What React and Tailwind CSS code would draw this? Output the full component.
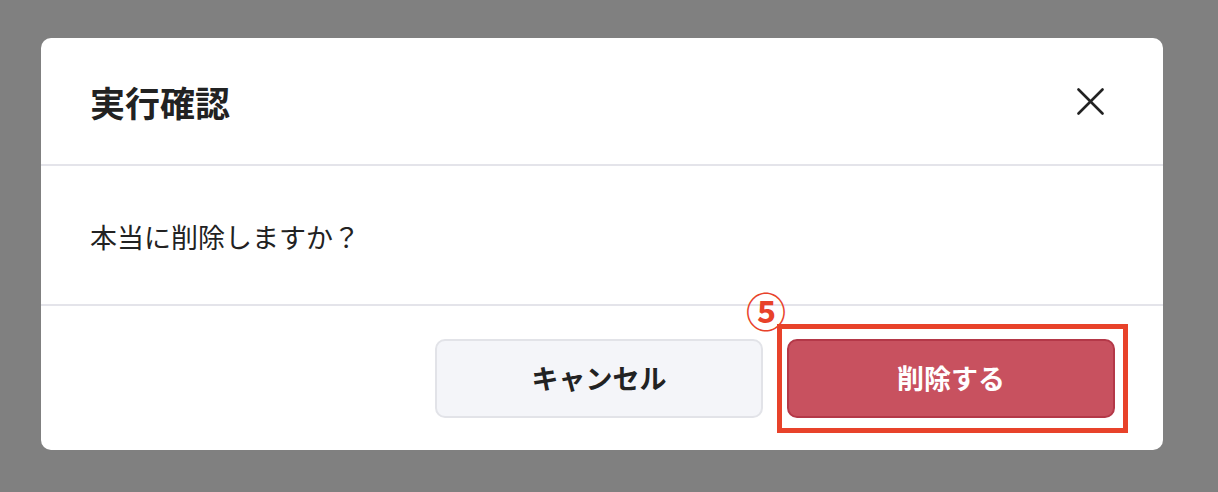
export default function App() {
  return (
    <div
      className="w-[1218px] h-[492px] bg-[#808080] pt-[38px] pl-[41px]"
      style={{ fontFamily: '"Noto Sans CJK JP", "Noto Sans", sans-serif' }}
    >
      <div className="w-[1122px] h-[412px] bg-white rounded-[10px] flex flex-col">
        {/* header */}
        <div className="h-[128px] flex items-center justify-between pl-[49px] pr-[59px] border-b-2 border-[#e4e4ea] shrink-0">
          <h1 className="text-[35px] font-bold text-[#222] leading-none">実行確認</h1>
          <button className="w-[27px] h-[27px] text-[#222]">
            <svg viewBox="0 0 27 27" width="27" height="27" fill="none" stroke="currentColor" strokeWidth="2.6" strokeLinecap="round">
              <line x1="1.5" y1="1.5" x2="25.5" y2="25.5" />
              <line x1="25.5" y1="1.5" x2="1.5" y2="25.5" />
            </svg>
          </button>
        </div>

        {/* body */}
        <div className="h-[140px] flex items-center pl-[49px] border-b-2 border-[#e4e4ea] shrink-0">
          <p className="text-[27px] text-[#222] leading-none pt-[2px]">本当に削除しますか？</p>
        </div>

        {/* footer */}
        <div className="flex-1 flex items-center justify-end gap-[24px] pr-[48px]">
          <button className="w-[328px] h-[79px] rounded-[10px] bg-[#f4f5f9] border-2 border-[#e2e3e8] text-[27px] font-bold text-[#222]">
            キャンセル
          </button>
          <div className="relative">
            <button className="w-[328px] h-[79px] rounded-[10px] bg-[#c8515f] border-2 border-[#b43848] text-[27px] font-bold text-white">
              削除する
            </button>
            <div className="absolute -left-[10px] -right-[13px] -top-[15px] -bottom-[15px] border-[5px] border-[#e8422a] pointer-events-none" />
            <span className="absolute -left-[41px] -top-[49px] text-[40px] font-bold leading-none text-[#e8422a]">
              ⑤
            </span>
          </div>
        </div>
      </div>
    </div>
  );
}
